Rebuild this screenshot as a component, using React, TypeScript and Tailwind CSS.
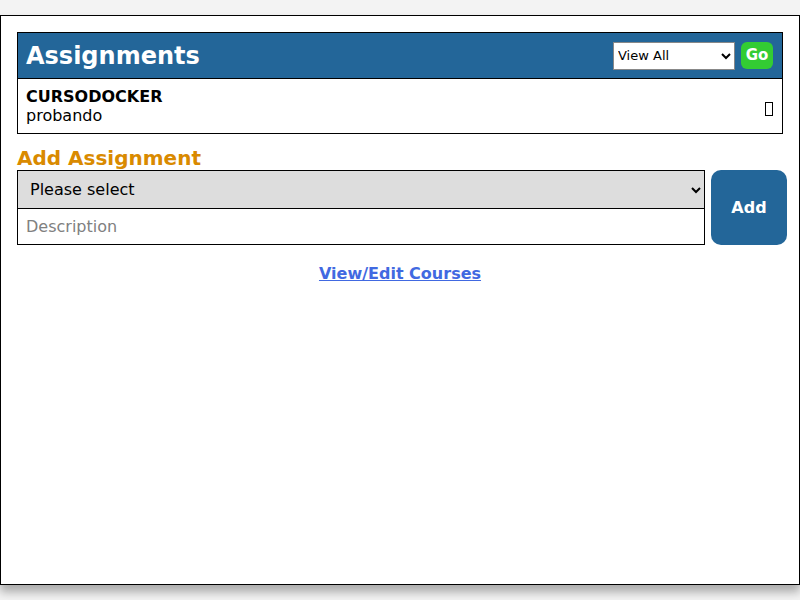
import React from 'react';

const App = () => {
  return (
    <div className="min-h-[600px] w-[800px] bg-[#f3f3f3] pt-[15px] font-['DejaVu_Sans',sans-serif]">
      <div className="h-[570px] border border-black bg-white p-4 shadow-[0_7px_9px_rgba(0,0,0,0.3)]">
        {/* Assignments table */}
        <div className="border border-black">
          <div className="flex h-[45px] items-center justify-between bg-[#236699] pl-2 pr-[9px]">
            <h2 className="text-[24px] font-bold leading-[28px] text-white">Assignments</h2>
            <div className="flex items-center gap-[6px]">
              <select className="h-[28px] w-[122px] border border-[#888] bg-white text-[13px] text-black">
                <option>View All</option>
              </select>
              <button className="h-[27px] w-[32px] rounded-[6px] bg-[#33cc33] text-[15px] font-bold text-white">
                Go
              </button>
            </div>
          </div>
          <div className="flex items-center justify-between border-t border-black px-2 py-[8px] pr-[9px]">
            <div className="text-[16px] leading-[19px] text-black">
              <div className="font-bold">CURSODOCKER</div>
              <div>probando</div>
            </div>
            <span className="mt-[6px] inline-block h-[14px] w-[8px] border border-black"></span>
          </div>
        </div>

        {/* Add Assignment */}
        <h3 className="mt-[12px] text-[20px] font-bold leading-[24px] text-[#d98a00]">Add Assignment</h3>
        <div className="flex gap-[6px]">
          <div className="flex w-[688px] shrink-0 flex-col border border-black">
            <select className="h-[38px] w-full border-b border-black bg-[#dddddd] pl-2 pr-2 text-[16px] text-black">
              <option>Please select</option>
            </select>
            <input
              className="h-[35px] w-full bg-white px-2 text-[16px] text-black placeholder:text-[#808080] outline-none"
              placeholder="Description"
            />
          </div>
          <button className="h-[75px] w-[76px] shrink-0 rounded-[10px] bg-[#236699] text-[16px] font-bold text-white">
            Add
          </button>
        </div>

        <div className="mt-[17px] text-center">
          <a href="#" className="text-[16px] font-bold text-[#4169e1] underline">
            View/Edit Courses
          </a>
        </div>
      </div>
    </div>
  );
};

export default App;
